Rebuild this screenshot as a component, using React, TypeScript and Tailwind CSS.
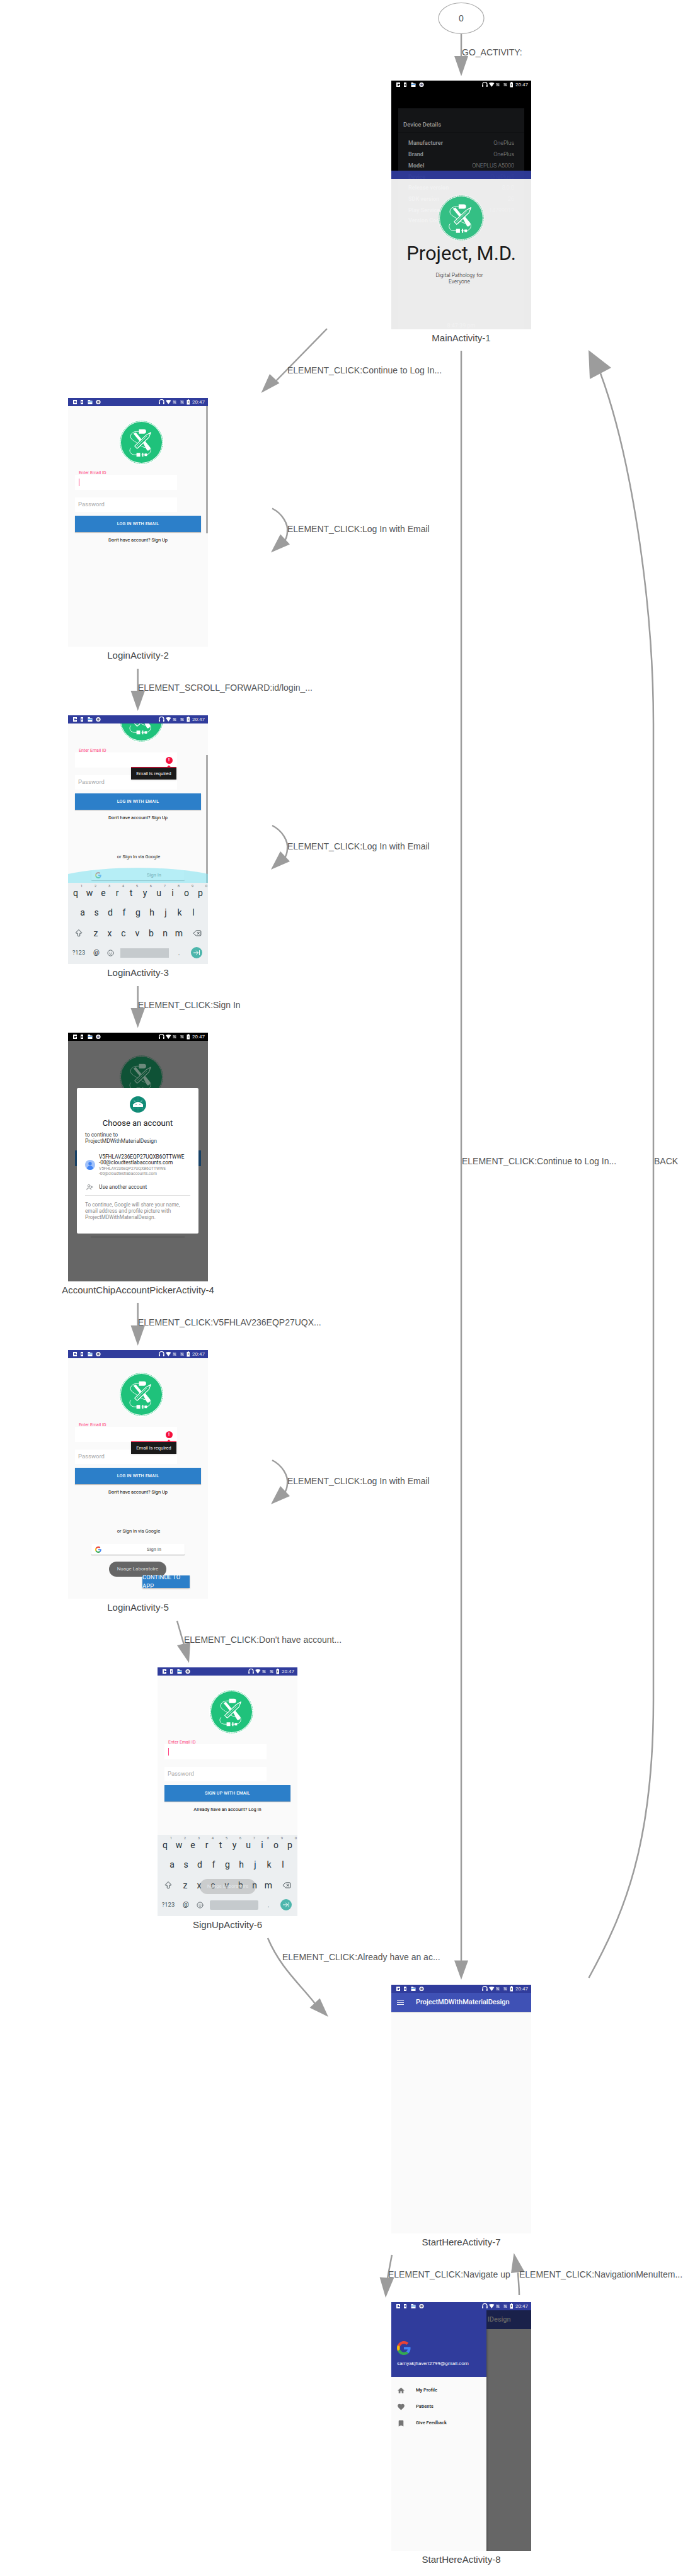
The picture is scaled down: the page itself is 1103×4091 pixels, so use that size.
import React from 'react';
import { ArrowBigUp, ArrowRightToLine, Delete, Smile, UserPlus } from 'lucide-react';

const EDGE_GRAY = '#9c9c9c';

// straight and curved edges of the activity graph: [line path, arrow head]
const edges: [string, string][] = [
  ['M732 53V92', '721,89 743,89 732,121'],
  ['M519 522L437 606', '428,594 443.5,608.5 414.5,624'],
  ['M218.7 1062V1098', '207.5,1097 230,1097 218.7,1129'],
  ['M218.7 1566V1602', '207.5,1601 230,1601 218.7,1632.5'],
  ['M218.7 2069V2106', '207.5,2105 230,2105 218.7,2137'],
  ['M281 2574L292 2612', '281,2613 302,2608 300,2641'],
  ['M425 3078C445 3125 475 3150 500 3182', '491.5,3188.5 507.6,3173.5 521,3203'],
  ['M732 557V3114', '721,3113.5 743,3113.5 732,3144'],
  ['M934.5 3141C990 3040 1037 2930 1037 2700V1150C1037 950 1000 720 953 593', '936,602 970,584 934,556'],
  ['M622 3581L615 3618', '602.6,3616.5 625,3618 612,3649'],
  ['M824 3645C824 3635 823 3625 822 3609', '811,3610 832,3607 815.5,3578'],
];

// the three self loops share a shape, only the y differs
const loops = [807.5, 1311, 2319];

const GoogleG = ({ className }: { className: string }) => (
  <svg viewBox="0 0 48 48" className={className}>
    <path fill="#EA4335" d="M24 9.5c3.54 0 6.71 1.22 9.21 3.6l6.85-6.85C35.9 2.38 30.47 0 24 0 14.62 0 6.51 5.38 2.56 13.22l7.98 6.19C12.43 13.72 17.74 9.5 24 9.5z" />
    <path fill="#4285F4" d="M46.98 24.55c0-1.57-.15-3.09-.38-4.55H24v9.02h12.94c-.58 2.96-2.26 5.48-4.78 7.18l7.73 6c4.51-4.18 7.09-10.36 7.09-17.65z" />
    <path fill="#FBBC05" d="M10.53 28.59c-.48-1.45-.76-2.99-.76-4.59s.27-3.14.76-4.59l-7.98-6.19C.92 16.46 0 20.12 0 24c0 3.88.92 7.54 2.56 10.78l7.97-6.19z" />
    <path fill="#34A853" d="M24 48c6.48 0 11.93-2.13 15.89-5.81l-7.73-6c-2.15 1.45-4.92 2.3-8.16 2.3-6.26 0-11.57-4.22-13.47-9.91l-7.98 6.19C6.51 42.62 14.62 48 24 48z" />
  </svg>
);

const Logo = ({ className, fill = '#1fc27b', ink = '#ffffff', halo = '#ffffff' }: { className: string; fill?: string; ink?: string; halo?: string }) => (
  <svg viewBox="0 0 72 72" className={className}>
    <circle cx="36" cy="36" r="36" fill={halo} />
    <circle cx="36" cy="36" r="34.2" fill="none" stroke={fill} strokeWidth="0.8" strokeDasharray="2 0.8" />
    <circle cx="36" cy="36" r="33" fill={fill} />
    {/* mouse, cable and plug */}
    <path d="M32 15h8a3.5 3.5 0 0 1 0 7h-8z" fill={ink} />
    <path d="M32 18.5h-3C21 18.500 17 24 19 29c2 4 8 6 17 13 6 4 13 2 14 3 3 5-1 11-8 11h-6M30 56h-5c-7 0-10-7-6-11" fill="none" stroke={ink} strokeWidth="0.9" />
    <path d="M28 53h6v6h-6zM37 53h2v6h-2zM41 54h4v4h-4z" fill={ink} />
    {/* screwdriver */}
    <path d="M23 22l4-2 9 11-3 3zM38 36l3-3 9 11c1 3-2 6-5 5z" fill={ink} />
    {/* pencil */}
    <path d="M25 42L44 24l7-4-3 8-19 18z" fill={fill} stroke={ink} strokeWidth="1.2" strokeLinejoin="round" />
    <path d="M28 43L45 26M31 45L47 29" stroke={ink} strokeWidth="0.7" />
    <path d="M48.500 21.500l2.500-1.500-1 3z" fill={ink} />
  </svg>
);

const StatusBar = ({ bg }: { bg: string }) => (
  <div className={`h-[13px] shrink-0 flex items-center justify-between pl-[8px] pr-[5px] ${bg}`}>
    <svg viewBox="0 0 44 9" className="w-[44px] h-[9px]">
      <path d="M0 1h6v3H4v1h2v3H0zM2 3v3h2V3z" fill="#fff" fillRule="evenodd" />
      <path d="M12 1h4v7h-4zM13.300 3v3h1.400V3z" fill="#fff" fillRule="evenodd" />
      <path d="M23.500 1h3l1 1.500h3V8h-7z" fill="#fff" />
      <path d="M23.500 3.500h7v1.500h-7z" fill="#3f8fe0" />
      <circle cx="40" cy="4.500" r="3.600" fill="#fff" />
      <circle cx="40" cy="4.500" r="1.900" fill="#6a6a8a" />
    </svg>
    <div className="flex items-center gap-[3px]">
      <svg viewBox="0 0 50 9" className="w-[50px] h-[9px]">
        <path d="M1 7.500V4a3.500 3.500 0 0 1 7 0v3.500" fill="none" stroke="#fff" strokeWidth="1.200" />
        <path d="M.500 5h1.500v3H.500zM7 5h1.500v3H7z" fill="#fff" />
        <path d="M11 2c2.500-1.300 6-1.300 8.500 0l-4.250 6z" fill="#fff" />
        <path d="M22.500 2h5v5h-5z" fill="#fff" fillOpacity="0.45" />
        <path d="M22.500 2l5 5" stroke="#fff" strokeOpacity="0.8" strokeWidth="0.7" />
        <path d="M34.500 2h5v5h-5z" fill="#fff" fillOpacity="0.45" />
        <path d="M34.500 2l5 5" stroke="#fff" strokeOpacity="0.8" strokeWidth="0.7" />
        <path d="M44.500 1h1.500V0h1.500v1H49v7.500h-4.500z" fill="#fff" />
        <path d="M46.200 3h1v3h-1z" fill="#444" />
      </svg>
      <span className="font-['Roboto'] text-[8px] leading-[9px] text-[#e4e4ee]">20:47</span>
    </div>
  </div>
);

const rowOne = ['q', 'w', 'e', 'r', 't', 'y', 'u', 'i', 'o', 'p'];
const rowTwo = ['a', 's', 'd', 'f', 'g', 'h', 'j', 'k', 'l'];
const rowThree = ['z', 'x', 'c', 'v', 'b', 'n', 'm'];

const Keyboard = ({ toast }: { toast?: boolean }) => (
  <div className="relative h-[129px] shrink-0 bg-[#eceff1] font-['Roboto'] text-[14px] text-[#263238]">
    <div className="h-[32px] pl-[1px] flex items-center">
      {rowOne.map((key, i) => (
        <span key={key} className="relative w-[22px] text-center leading-[16px]">
          {key}
          <span className="absolute right-[0px] top-[-7px] text-[6px] leading-[7px] text-[#6b7378]">{(i + 1) % 10}</span>
        </span>
      ))}
    </div>
    <div className="h-[30px] pl-[12px] flex items-center">
      {rowTwo.map((key) => (
        <span key={key} className="w-[22px] text-center leading-[16px]">{key}</span>
      ))}
    </div>
    <div className="h-[36px] flex items-center">
      <span className="w-[33px] flex justify-center"><ArrowBigUp size={14} strokeWidth={1.5} /></span>
      {rowThree.map((key) => (
        <span key={key} className="w-[22px] text-center leading-[16px]">{key}</span>
      ))}
      <span className="w-[35px] flex justify-center"><Delete size={14} strokeWidth={1.5} /></span>
    </div>
    <div className="h-[26px] flex items-center">
      <span className="w-[34px] text-center text-[9.500px] text-[#455a64]">?123</span>
      <span className="w-[22px] text-center text-[11px]">@</span>
      <span className="w-[22px] flex justify-center"><Smile size={11} strokeWidth={1.5} /></span>
      <span className={`ml-[5px] w-[77px] h-[15px] bg-[#c5cacd] ${toast ? 'rounded-[2px]' : ''}`} />
      <span className="w-[32px] text-center text-[10px]">.</span>
      <span className="w-[18px] h-[18px] ml-[3px] rounded-full bg-[#4db6ac] flex items-center justify-center text-white">
        <ArrowRightToLine size={12} />
      </span>
    </div>
    {toast && (
      <div className="absolute left-[67px] top-[70px] w-[89px] h-[24px] rounded-full bg-[#65656540] flex items-center justify-center text-[8px] text-[#eceff1cc]">
        Nuage Laboratoire
      </div>
    )}
  </div>
);

type FormProps = {
  button: string;
  footer: string;
  cursor?: boolean;
  error?: boolean;
  google?: boolean;
  logoClass?: string;
};

// the login and sign up screens are the same scrolling form
const AuthForm = ({ button, footer, cursor, error, google, logoClass = 'ml-[80.5px]' }: FormProps) => (
  <div className="pt-[22px] font-['Roboto']">
    <Logo className={`w-[71px] h-[71px] ${logoClass}`} />
    <div className="mt-[9px] h-[7px] pl-[17px] text-[7px] leading-[8px] text-[#ff4081]">Enter Email ID</div>
    <div className="relative ml-[11px] w-[162px] h-[24px] bg-white">
      {cursor && <span className="absolute left-[6px] top-[6px] w-[1px] h-[12px] bg-[#ff4081]" />}
      {error && (
        <>
          <span className="absolute left-[143.500px] top-[6.500px] w-[11px] h-[11px] rounded-full bg-[#f5103c] flex items-center justify-center text-white text-[8px] font-bold leading-none">!</span>
          <span className="absolute left-[147px] top-[20.500px] w-[4px] h-[4px] rotate-45 bg-[#f5103c]" />
          <div className="absolute z-10 left-[89px] top-[23px] w-[72px] h-[20px] bg-[#1a1a1a] border-t-[1.500px] border-[#f5103c] shadow-sm flex items-center justify-center text-[7.500px] text-white">
            Email is required
          </div>
        </>
      )}
    </div>
    <div className="mt-[12px] ml-[11px] w-[162px] h-[23px] bg-white pl-[5px] flex items-center text-[9.500px] text-[#a8a8a8]">Password</div>
    <div className="mt-[6px] ml-[11px] w-[200px] h-[26px] bg-[#2c7fc9] shadow-[0_1px_1px_#00000040] flex items-center justify-center text-[7px] font-medium tracking-[0.2px] text-white">
      {button}
    </div>
    <div className="mt-[8px] ml-[11px] w-[200px] text-center text-[7.500px] leading-[10px] text-black">{footer}</div>
    {google && (
      <>
        <div className="mt-[52px] ml-[12px] w-[200px] text-center text-[7.500px] leading-[10px] text-[#222]">or Sign In via Google</div>
        <div className="mt-[15px] ml-[37px] w-[148px] h-[17px] bg-white shadow-[0_1px_1px_#00000060] rounded-[1px] flex items-center pl-[6px] pr-[37px]">
          <GoogleG className="w-[10px] h-[10px]" />
          <span className="flex-1 text-right text-[7.500px] font-medium text-[#757575]">Sign In</span>
        </div>
      </>
    )}
  </div>
);

const Screen = ({ className, caption, children }: { className: string; caption: string; children: React.ReactNode }) => (
  <div className={`absolute w-[222px] ${className}`}>
    <div className="relative h-[395px] overflow-hidden flex flex-col bg-[#fafafa]">{children}</div>
    <div className="mt-[6px] flex justify-center whitespace-nowrap text-[15px] leading-[16px] text-[#444]">{caption}</div>
  </div>
);

const DeviceRow = ({ label, value, className = '' }: { label: string; value: string; className?: string }) => (
  <div className={`h-[17.800px] flex items-center justify-between text-[9px] text-[#8a8a8a] ${className}`}>
    <span className="font-bold">{label}</span>
    <span className="font-light">{value}</span>
  </div>
);

const MainScreen = () => (
  <>
    <StatusBar bg="bg-black" />
    <div className="flex-1 bg-black pt-[31px] px-[11px] font-['Roboto']">
      <div className="h-full bg-[#141517]">
        <div className="h-[39px] pl-[8px] pt-[20px] border-b border-[#101113] text-[9.500px] leading-[12px] font-medium text-[#9a9a9a]">Device Details</div>
        <div className="px-[16px] pt-[8px]">
          <DeviceRow label="Manufacturer" value="OnePlus" />
          <DeviceRow label="Brand" value="OnePlus" />
          <DeviceRow label="Model" value="ONEPLUS A5000" />
          <DeviceRow label="Device" value="OnePlus5" />
          <DeviceRow label="Release version" value="8.0.0" />
          <DeviceRow label="SDK version" value="26" />
          <DeviceRow label="Play Services" value="14799019" />
          <div className="text-[9px] font-bold text-[#8a8a8a]">Version Code</div>
          <div className="mt-[154px] text-center text-[9px] text-[#8a8a8a]">8:47:39 pm</div>
        </div>
      </div>
    </div>
    {/* splash fading in over the device dialog */}
    <div className="absolute left-0 right-0 top-[143px] h-[13px] bg-[#2f3b9cf2]" />
    <div className="absolute left-0 right-0 top-[156px] bottom-0 bg-[#f8f8f8f2] flex flex-col items-center pt-[25px] font-['Roboto']">
      <Logo className="w-[74px] h-[74px]" fill="#34bf84" halo="#f2f2f2" />
      <div className="mt-[2px] text-[31px] leading-[36px] text-[#1a1a1a]">Project, M.D.</div>
      <div className="mt-[11px] mr-[6px] w-[90px] text-center text-[8.500px] font-light leading-[10px] text-[#222]">Digital Pathology for Everyone</div>
    </div>
  </>
);

const Login = ({ children, shift = '', ...form }: FormProps & { children?: React.ReactNode; shift?: string }) => (
  <div className="relative flex-1 overflow-hidden">
    <div className={shift}>
      <AuthForm {...form} />
    </div>
    {children}
  </div>
);

const AccountPicker = () => (
  <>
    <StatusBar bg="bg-black" />
    <div className="relative flex-1 bg-[#666666] font-['Roboto']">
      <Logo className="mt-[22px] ml-[80.5px] w-[71px] h-[71px]" fill="#0f5236" ink="#6d8a7c" halo="#666666" />
      <div className="mt-[81px] ml-[11px] w-[200px] h-[25px] bg-[#174064]" />
      <div className="mt-[96px] ml-[36px] w-[149px] h-[17px] border-b border-[#444] pl-[6px] flex items-start">
        <span className="w-[10px] h-[10px] rounded-full bg-[#0f5236]" />
      </div>
      <div className="absolute left-[14px] top-[75px] w-[193px] h-[231px] bg-white rounded-[2px] pt-[13px]">
        <svg viewBox="0 0 26 26" className="mx-auto w-[26px] h-[26px]">
          <circle cx="13" cy="13" r="13" fill="#0e8a75" />
          <path d="M6 0V26M13 0V26M20 0V26M0 7H26M0 13H26M0 19H26" stroke="#fff" strokeOpacity="0.25" strokeWidth="0.4" />
          <path d="M5 18a8 8 0 0 1 16 0z" fill="#fff" transform="translate(0 -1)" />
          <path d="M5 12.500h16V16H5z" fill="#fff" />
          <path d="M8.500 9l-1.500-2M17.500 9l1.500-2" stroke="#fff" strokeWidth="0.7" />
          <circle cx="10" cy="13" r="0.8" fill="#0e8a75" />
          <circle cx="16" cy="13" r="0.8" fill="#0e8a75" />
        </svg>
        <div className="mt-[9px] text-center text-[13px] leading-[16px] text-[#202124]">Choose an account</div>
        <div className="mt-[5px] pl-[13px] text-[8.500px] leading-[10px] text-[#3c4043]">
          <div>to continue to</div>
          <div>ProjectMDWithMaterialDesign</div>
        </div>
        <div className="mt-[15px] flex items-center">
          <svg viewBox="0 0 16 16" className="ml-[13px] w-[16px] h-[16px]">
            <circle cx="8" cy="8" r="8" fill="#a1c2fa" />
            <circle cx="8" cy="6" r="2.700" fill="#4285f4" />
            <path d="M3 14c0-3 2-4.500 5-4.500s5 1.500 5 4.500a8 8 0 0 1-10 0z" fill="#4285f4" />
          </svg>
          <div className="ml-[6px] w-[140px]">
            <div className="text-[8.300px] leading-[10px] text-[#202124]">V5FHLAV236EQP27UQXB6OTTWWE</div>
            <div className="text-[8.300px] leading-[9px] text-[#202124]">-00@cloudtestlabaccounts.com</div>
            <div className="mt-[1px] text-[6.500px] leading-[8px] text-[#8a8a8a]">V5FHLAV236EQP27UQXB6OTTWWE</div>
            <div className="text-[6.500px] leading-[8px] text-[#8a8a8a]">-00@cloudtestlabaccounts.com</div>
          </div>
        </div>
        <div className="mt-[11px] flex items-center h-[12px]">
          <UserPlus size={11} strokeWidth={1.5} className="ml-[15px] text-[#5f6368]" />
          <span className="ml-[9px] text-[8.300px] text-[#3c4043]">Use another account</span>
        </div>
        <div className="mt-[7px] mx-[13px] border-t border-[#e0e0e0]" />
        <div className="mt-[9px] px-[13px] text-[8.200px] leading-[10px] text-[#8a8a8a]">
          <div>To continue, Google will share your name,</div>
          <div>email address and profile picture with</div>
          <div>ProjectMDWithMaterialDesign.</div>
        </div>
      </div>
    </div>
  </>
);

const StartHere = () => (
  <>
    <StatusBar bg="bg-[#303c9c]" />
    <div className="h-[30px] bg-[#3f51b5] flex items-center shadow-[0_1px_1px_#00000030] font-['Roboto']">
      <div className="ml-[9px] w-[11px] flex flex-col gap-[2px]">
        <span className="h-[1px] bg-white" />
        <span className="h-[1px] bg-white" />
        <span className="h-[1px] bg-white" />
      </div>
      <span className="ml-[19px] text-[11px] font-medium text-white">ProjectMDWithMaterialDesign</span>
    </div>
  </>
);

const menu = [
  { label: 'My Profile', icon: 'M10 20v-6h4v6h5v-8h3L12 3 2 12h3v8z' },
  { label: 'Patients', icon: 'M12 21.350l-1.450-1.320C5.400 15.360 2 12.280 2 8.500 2 5.420 4.420 3 7.500 3c1.740 0 3.410.810 4.500 2.090C13.090 3.810 14.760 3 16.500 3 19.580 3 22 5.420 22 8.500c0 3.780-3.400 6.860-8.550 11.540L12 21.350z' },
  { label: 'Give Feedback', icon: 'M17 3H7c-1.100 0-1.990.900-1.990 2L5 21l7-3 7 3V5c0-1.100-.900-2-2-2z' },
];

const Drawer = () => (
  <>
    <StatusBar bg="bg-[#303c9c]" />
    <div className="flex-1 flex font-['Roboto']">
      <div className="w-[151px] flex flex-col">
        <div className="h-[106px] bg-[#303c9c] pl-[9px] pt-[49px]">
          <GoogleG className="w-[22px] h-[22px]" />
          <div className="mt-[9px] text-[8px] leading-[10px] text-white">samyakjhaveri2799@gmail.com</div>
        </div>
        <div className="pt-[8px]">
          {menu.map((item) => (
            <div key={item.label} className="h-[26px] flex items-center pl-[9px]">
              <svg viewBox="0 0 24 24" className="w-[13px] h-[13px]"><path d={item.icon} fill="#757575" /></svg>
              <span className="ml-[17px] text-[7.500px] font-medium text-[#222]">{item.label}</span>
            </div>
          ))}
        </div>
      </div>
      <div className="flex-1 flex flex-col bg-[#666666] shadow-[inset_3px_0_3px_-2px_#00000050]">
        <div className="h-[30px] bg-[#1a214a] flex items-center text-[11px] font-medium text-[#666]">
          <span className="w-[2px]" />lDesign
        </div>
      </div>
    </div>
  </>
);

const EdgeLabel = ({ className, children }: { className: string; children: string }) => (
  <span className={`absolute whitespace-nowrap text-[14px] leading-[16px] text-[#555] ${className}`}>{children}</span>
);

export default function App() {
  return (
    <div className="relative w-[1103px] h-[4091px] bg-white overflow-hidden font-['Liberation_Sans',sans-serif]">
      {/* edges */}
      <svg className="absolute inset-0" width="1103" height="4091">
        {edges.map(([line, head]) => (
          <g key={head}>
            <path d={line} fill="none" stroke={EDGE_GRAY} strokeWidth="2.500" />
            <polygon points={head} fill={EDGE_GRAY} />
          </g>
        ))}
        {loops.map((y) => (
          <g key={y} transform={`translate(0 ${y})`}>
            <path d="M432 0C448 8 458 25 456 38C455.500 45 454 48 452 51" fill="none" stroke={EDGE_GRAY} strokeWidth="2.500" />
            <polygon points="445,41 460,57 430,70" fill={EDGE_GRAY} />
          </g>
        ))}
        <ellipse cx="732" cy="29" rx="36" ry="24.500" fill="#fff" stroke="#aaa" strokeWidth="1.200" />
      </svg>
      <span className="absolute left-[696px] top-[21px] w-[72px] text-center text-[14px] leading-[16px] text-[#555]">0</span>

      {/* edge labels */}
      <EdgeLabel className="left-[733px] top-[75px]">GO_ACTIVITY:</EdgeLabel>
      <EdgeLabel className="left-[456px] top-[580px]">ELEMENT_CLICK:Continue to Log In...</EdgeLabel>
      <EdgeLabel className="left-[456px] top-[832px]">ELEMENT_CLICK:Log In with Email</EdgeLabel>
      <EdgeLabel className="left-[219px] top-[1084px]">ELEMENT_SCROLL_FORWARD:id/login_...</EdgeLabel>
      <EdgeLabel className="left-[456px] top-[1336px]">ELEMENT_CLICK:Log In with Email</EdgeLabel>
      <EdgeLabel className="left-[219px] top-[1588px]">ELEMENT_CLICK:Sign In</EdgeLabel>
      <EdgeLabel className="left-[219px] top-[2092px]">ELEMENT_CLICK:V5FHLAV236EQP27UQX...</EdgeLabel>
      <EdgeLabel className="left-[456px] top-[2344px]">ELEMENT_CLICK:Log In with Email</EdgeLabel>
      <EdgeLabel className="left-[292px] top-[2596px]">ELEMENT_CLICK:Don't have account...</EdgeLabel>
      <EdgeLabel className="left-[448px] top-[3100px]">ELEMENT_CLICK:Already have an ac...</EdgeLabel>
      <EdgeLabel className="left-[733px] top-[1836px]">ELEMENT_CLICK:Continue to Log In...</EdgeLabel>
      <EdgeLabel className="left-[1038px] top-[1836px]">BACK</EdgeLabel>
      <EdgeLabel className="left-[616px] top-[3604px]">ELEMENT_CLICK:Navigate up</EdgeLabel>
      <EdgeLabel className="left-[824px] top-[3604px]">ELEMENT_CLICK:NavigationMenuItem...</EdgeLabel>

      {/* activity nodes */}
      <Screen className="left-[621px] top-[128px]" caption="MainActivity-1">
        <MainScreen />
      </Screen>

      <Screen className="left-[108px] top-[632px]" caption="LoginActivity-2">
        <StatusBar bg="bg-[#303c9c]" />
        <Login button="LOG IN WITH EMAIL" footer="Don't have account? Sign Up" cursor>
          <span className="absolute right-0 top-0 w-[3px] h-[202px] bg-[#adadad]" />
        </Login>
      </Screen>

      <Screen className="left-[108px] top-[1136px]" caption="LoginActivity-3">
        <div className="relative z-10">
          <StatusBar bg="bg-[#303c9c]" />
        </div>
        <Login button="LOG IN WITH EMAIL" footer="Don't have account? Sign Up" error google shift="-mt-[63px]">
          <span className="absolute right-0 top-[50px] bottom-0 w-[3px] bg-[#adadad]" />
          <svg viewBox="0 0 222 24" className="absolute left-0 bottom-0 w-[222px] h-[24px]">
            <path d="M0 10C60 -3 162 -3 222 10V24H0z" fill="#85e3f0" fillOpacity="0.6" />
          </svg>
        </Login>
        <Keyboard />
      </Screen>

      <Screen className="left-[108px] top-[1640px]" caption="AccountChipAccountPickerActivity-4">
        <AccountPicker />
      </Screen>

      <Screen className="left-[108px] top-[2144px]" caption="LoginActivity-5">
        <StatusBar bg="bg-[#303c9c]" />
        <Login button="LOG IN WITH EMAIL" footer="Don't have account? Sign Up" error google>
          <div className="absolute left-[65px] top-[323px] w-[91px] h-[24px] rounded-full bg-[#666666] flex items-center justify-center font-['Roboto'] text-[8px] text-[#dddddd]">
            Nuage Laboratoire
          </div>
          <div className="absolute left-[118px] top-[345px] w-[75px] h-[20px] bg-[#2c7fc9] shadow-[0_1px_2px_#00000050] flex items-center justify-center font-['Roboto'] text-[9.500px] text-white">
            CONTINUE TO APP
          </div>
        </Login>
      </Screen>

      <Screen className="left-[250px] top-[2648px]" caption="SignUpActivity-6">
        <StatusBar bg="bg-[#303c9c]" />
        <Login button="SIGN UP WITH EMAIL" footer="Already have an account? Log In" cursor logoClass="ml-[81.5px]" />
        <Keyboard toast />
      </Screen>

      <Screen className="left-[621px] top-[3152px]" caption="StartHereActivity-7">
        <StartHere />
      </Screen>

      <Screen className="left-[621px] top-[3656px]" caption="StartHereActivity-8">
        <Drawer />
      </Screen>
    </div>
  );
}
